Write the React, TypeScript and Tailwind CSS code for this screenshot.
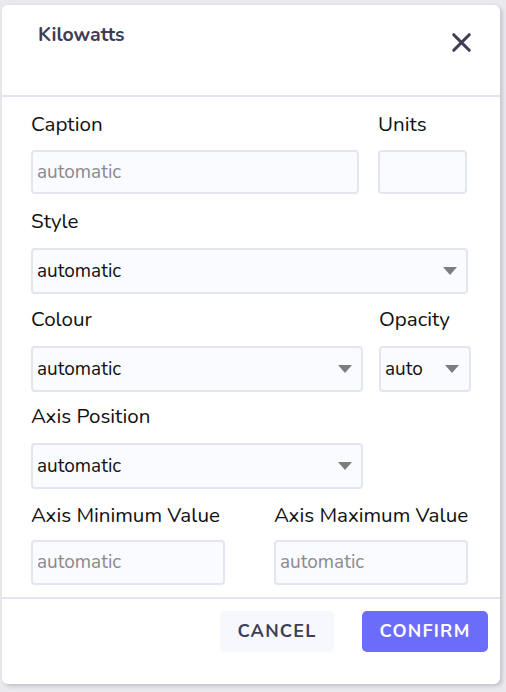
import { X } from "lucide-react";

const font = { fontFamily: "Nunito, Lato, 'Open Sans', sans-serif" };

function Caret() {
  return (
    <svg width="14" height="8" viewBox="0 0 14 8" className="shrink-0">
      <path d="M0 0 L14 0 L7 8 Z" fill="#7d7d7d" />
    </svg>
  );
}

function TextField({ placeholder, className }: { placeholder?: string; className: string }) {
  return (
    <div
      className={`flex items-center rounded-[4px] border-2 border-[#e3e5ef] bg-[#fafbfe] pl-[4px] text-[19px] text-[#8a8a8a] ${className}`}
    >
      {placeholder}
    </div>
  );
}

function SelectField({ value, className }: { value: string; className: string }) {
  return (
    <div
      className={`flex h-[46px] items-center justify-between rounded-[4px] border-2 border-[#e3e5ef] bg-[#fafbfe] pl-[4px] pr-[9px] text-[19px] text-[#111] ${className}`}
    >
      <span>{value}</span>
      <Caret />
    </div>
  );
}

function Label({ children, className = "" }: { children: string; className?: string }) {
  return <div className={`h-[28px] text-[20.6px] leading-[33px] text-[#111] ${className}`}>{children}</div>;
}

export default function App() {
  return (
    <div className="h-[692px] w-[506px] bg-[#e9e9ee] pl-[2px] pt-[5px]" style={font}>
      <div className="flex h-[679px] w-[498px] flex-col rounded-[6px] bg-white shadow-[2px_2px_4px_rgba(0,0,0,0.18)]">
        <div className="flex h-[92px] items-start justify-between border-b-2 border-[#e3e5ee] pl-[36px] pr-[23px]">
          <h2 className="pt-[18px] text-[19.5px] font-bold leading-[24px] text-[#3f3d56]">Kilowatts</h2>
          <X className="mt-[22px] h-[31px] w-[31px] text-[#3f3d56]" strokeWidth={2.4} />
        </div>

        <div className="flex flex-col px-[29px] pt-[11px]">
          <div className="flex gap-[19px]">
            <div className="flex w-[328px] flex-col">
              <Label className="mb-[14px]">Caption</Label>
              <TextField placeholder="automatic" className="h-[44px] w-[328px]" />
            </div>
            <div className="flex w-[89px] flex-col">
              <Label className="mb-[14px] text-[19.5px]">Units</Label>
              <TextField className="h-[44px] w-[89px]" />
            </div>
          </div>

          <div className="mt-[11px] flex flex-col">
            <Label className="mb-[15px]">Style</Label>
            <SelectField value="automatic" className="w-[437px]" />
          </div>

          <div className="mt-[9px] flex gap-[16px]">
            <div className="flex w-[332px] flex-col">
              <Label className="mb-[15px]">Colour</Label>
              <SelectField value="automatic" className="w-[332px]" />
            </div>
            <div className="flex w-[92px] flex-col">
              <Label className="mb-[15px]">Opacity</Label>
              <SelectField value="auto" className="w-[92px] pr-[10px]" />
            </div>
          </div>

          <div className="mt-[8px] flex flex-col">
            <Label className="mb-[15px]">Axis Position</Label>
            <SelectField value="automatic" className="w-[332px]" />
          </div>

          <div className="mt-[10px] flex gap-[49px]">
            <div className="flex w-[194px] flex-col">
              <Label className="mb-[13px] whitespace-nowrap">Axis Minimum Value</Label>
              <TextField placeholder="automatic" className="h-[45px] w-[194px]" />
            </div>
            <div className="flex w-[194px] flex-col">
              <Label className="mb-[13px] whitespace-nowrap">Axis Maximum Value</Label>
              <TextField placeholder="automatic" className="h-[45px] w-[194px]" />
            </div>
          </div>
        </div>

        <div className="mt-[12px] border-t-2 border-[#e3e5ee]" />
        <div className="flex justify-end gap-[28px] pr-[12px] pt-[12px]">
          <button className="h-[41px] w-[114px] rounded-[5px] bg-[#f7f8fd] text-[18px] font-bold tracking-[1.2px] text-[#3f3d56]">
            CANCEL
          </button>
          <button className="h-[41px] w-[126px] rounded-[5px] bg-[#6c6cfa] text-[18px] font-bold tracking-[1.2px] text-white">
            CONFIRM
          </button>
        </div>
      </div>
    </div>
  );
}
